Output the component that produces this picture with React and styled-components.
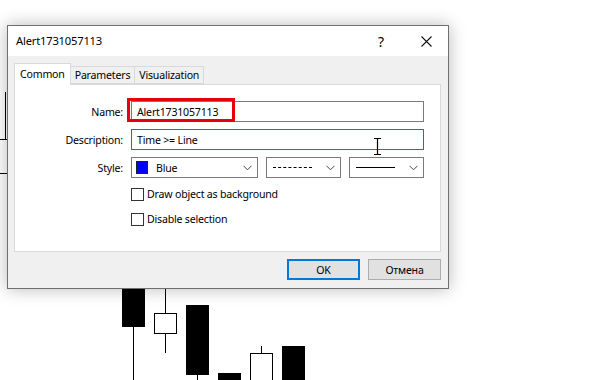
import React from 'react';
import styled, { createGlobalStyle } from 'styled-components';

const FONT = '"Noto Sans", "Open Sans", sans-serif';

const GlobalStyle = createGlobalStyle`
  body {
    margin: 0;
    font-family: ${FONT};
    font-size: 10.6px;
    color: #000;
    background: #fff;
  }
`;

const Stage = styled.div`
  position: relative;
  width: 604px;
  height: 380px;
  overflow: hidden;
  background: #fff;
`;

const ChartLayer = styled.svg`
  position: absolute;
  left: 0;
  top: 0;
`;

const Window = styled.div`
  position: absolute;
  left: 7px;
  top: 25px;
  width: 442px;
  height: 264px;
  box-sizing: border-box;
  border: 1px solid #6f6f6f;
  box-shadow: 0 0 16px rgba(0, 0, 0, 0.28);
  display: flex;
  flex-direction: column;
  background: #f0f0f0;
`;

const TitleBar = styled.div`
  height: 30px;
  flex: none;
  background: #fff;
  display: flex;
  align-items: center;
  padding-left: 8px;
`;

const TitleText = styled.div`
  flex: 1;
  font-size: 11.2px;
  letter-spacing: -0.2px;
  padding-bottom: 1px;
`;

const TitleButton = styled.div`
  width: ${p => p.$w}px;
  height: 30px;
  display: flex;
  align-items: center;
  justify-content: center;
  font-size: 14px;
`;

const Body = styled.div`
  flex: 1;
  display: flex;
  flex-direction: column;
  padding: 7px 7px 8px 6px;
`;

const TabStrip = styled.div`
  display: flex;
  align-items: flex-end;
  height: 21px;
  flex: none;
  position: relative;
  z-index: 1;
`;

const Tab = styled.div`
  box-sizing: border-box;
  height: ${p => (p.$active ? 22 : 18)}px;
  margin-bottom: ${p => (p.$active ? -1 : 0)}px;
  padding: 0 ${p => (p.$active ? 5 : 4)}px;
  border: 1px solid #d9d9d9;
  border-bottom: ${p => (p.$active ? 'none' : '1px solid #d9d9d9')};
  border-left: ${p => (p.$first ? '1px solid #d9d9d9' : 'none')};
  background: ${p => (p.$active ? '#fff' : '#f0f0f0')};
  display: flex;
  align-items: ${p => (p.$active ? 'flex-start' : 'center')};
  padding-top: ${p => (p.$active ? 3 : 0)}px;
  letter-spacing: -0.2px;
`;

const TabPanel = styled.div`
  flex: 1;
  background: #fff;
  border: 1px solid #d9d9d9;
  padding: 16px 16px 0 0;
`;

const FormGrid = styled.div`
  display: grid;
  grid-template-columns: 108px 1fr;
  column-gap: 8px;
  row-gap: 7px;
  align-items: center;
`;

const FieldLabel = styled.div`
  text-align: right;
  letter-spacing: -0.2px;
`;

const FieldWrap = styled.div`
  position: relative;
`;

const TextField = styled.div`
  height: 21px;
  box-sizing: border-box;
  border: 1px solid ${p => (p.$focused ? '#0078d7' : '#7a7a7a')};
  background: #fff;
  display: flex;
  align-items: center;
  padding-left: 5px;
  letter-spacing: -0.2px;
`;

const Highlight = styled.div`
  position: absolute;
  left: -4px;
  top: -3px;
  width: 108px;
  height: 24px;
  border: 3px solid #e8000b;
  box-sizing: border-box;
`;

const StyleRow = styled.div`
  display: flex;
  gap: 8px;
`;

const Combo = styled.div`
  box-sizing: border-box;
  height: 21px;
  border: 1px solid #7a7a7a;
  background: #fff;
  display: flex;
  align-items: center;
  padding: 0 5px 0 4px;
  gap: 8px;
  ${p => (p.$w ? `width: ${p.$w}px; flex: none;` : 'flex: 1;')}
`;

const Swatch = styled.div`
  width: 12px;
  height: 13px;
  box-sizing: border-box;
  background: #0000ff;
  border: 1px solid #222;
  flex: none;
`;

const ComboText = styled.div`
  flex: 1;
  letter-spacing: -0.2px;
`;

const LineSample = styled.div`
  flex: 1;
  margin-left: 2px;
  margin-right: 6px;
  border-top: 1px ${p => p.$kind} #000;
  height: 0;
`;

const CheckRow = styled.div`
  height: 18px;
  display: flex;
  align-items: center;
  gap: 3px;
`;

const CheckBox = styled.div`
  width: 13px;
  height: 13px;
  box-sizing: border-box;
  border: 1px solid #333;
  background: #fff;
`;

const CheckText = styled.div`
  letter-spacing: -0.2px;
`;

const Footer = styled.div`
  margin-top: 7px;
  display: flex;
  justify-content: flex-end;
  gap: 8px;
`;

const DialogButton = styled.div`
  width: 73px;
  height: 21px;
  box-sizing: border-box;
  border: ${p => (p.$default ? '2px solid #0078d7' : '1px solid #adadad')};
  background: #e1e1e1;
  display: flex;
  align-items: center;
  justify-content: center;
  letter-spacing: -0.2px;
`;

const Cursor = styled.svg`
  position: absolute;
  left: 373px;
  top: 138px;
`;

const Chevron = () => (
  <svg width="9" height="6" viewBox="0 0 9 6">
    <path d="M0.5 0.8 L4.5 4.8 L8.5 0.8" fill="none" stroke="#444" strokeWidth="1" />
  </svg>
);

const candles = [
  { x: 122, top: 250, bottom: 326, wickTop: 250, wickBottom: 380, filled: true },
  { x: 154, top: 313, bottom: 333, wickTop: 250, wickBottom: 353, filled: false },
  { x: 186, top: 305, bottom: 374, wickTop: 305, wickBottom: 380, filled: true },
  { x: 218, top: 373, bottom: 380, wickTop: 373, wickBottom: 380, filled: true },
  { x: 250, top: 353, bottom: 385, wickTop: 346, wickBottom: 380, filled: false },
  { x: 282, top: 346, bottom: 380, wickTop: 346, wickBottom: 380, filled: true },
];

const Chart = () => (
  <ChartLayer width="604" height="380">
    <line x1="5.5" y1="92" x2="5.5" y2="139" stroke="#000" />
    <line x1="0" y1="139.5" x2="8" y2="139.5" stroke="#000" />
    <line x1="0" y1="173.5" x2="8" y2="173.5" stroke="#000" />
    {candles.map(c => (
      <g key={c.x}>
        <line x1={c.x + 11.5} y1={c.wickTop} x2={c.x + 11.5} y2={c.wickBottom} stroke="#000" />
        <rect
          x={c.x + 0.5}
          y={c.top + 0.5}
          width="22"
          height={c.bottom - c.top}
          fill={c.filled ? '#000' : '#fff'}
          stroke="#000"
        />
      </g>
    ))}
  </ChartLayer>
);

export default function App() {
  return (
    <Stage>
      <GlobalStyle />
      <Chart />
      <Window>
        <TitleBar>
          <TitleText>Alert1731057113</TitleText>
          <TitleButton $w={46}>?</TitleButton>
          <TitleButton $w={44}>
            <svg width="11" height="11" viewBox="0 0 11 11">
              <path d="M0.5 0.5 L10.5 10.5 M10.5 0.5 L0.5 10.5" stroke="#111" strokeWidth="1.1" />
            </svg>
          </TitleButton>
        </TitleBar>
        <Body>
          <TabStrip>
            <Tab $active $first>Common</Tab>
            <Tab>Parameters</Tab>
            <Tab>Visualization</Tab>
          </TabStrip>
          <TabPanel>
            <FormGrid>
              <FieldLabel>Name:</FieldLabel>
              <FieldWrap>
                <TextField>Alert1731057113</TextField>
                <Highlight />
              </FieldWrap>
              <FieldLabel>Description:</FieldLabel>
              <TextField $focused>Time &gt;= Line</TextField>
              <FieldLabel>Style:</FieldLabel>
              <StyleRow>
                <Combo>
                  <Swatch />
                  <ComboText>Blue</ComboText>
                  <Chevron />
                </Combo>
                <Combo $w={75}>
                  <LineSample $kind="dashed" />
                  <Chevron />
                </Combo>
                <Combo $w={75}>
                  <LineSample $kind="solid" />
                  <Chevron />
                </Combo>
              </StyleRow>
              <div />
              <CheckRow>
                <CheckBox />
                <CheckText>Draw object as background</CheckText>
              </CheckRow>
              <div />
              <CheckRow>
                <CheckBox />
                <CheckText>Disable selection</CheckText>
              </CheckRow>
            </FormGrid>
          </TabPanel>
          <Footer>
            <DialogButton $default>OK</DialogButton>
            <DialogButton>Отмена</DialogButton>
          </Footer>
        </Body>
      </Window>
      <Cursor width="9" height="17" viewBox="0 0 9 17">
        <path d="M1 0.5 H8 M1 16.5 H8 M4.5 1 V16" stroke="#000" strokeWidth="1.2" fill="none" />
      </Cursor>
    </Stage>
  );
}
